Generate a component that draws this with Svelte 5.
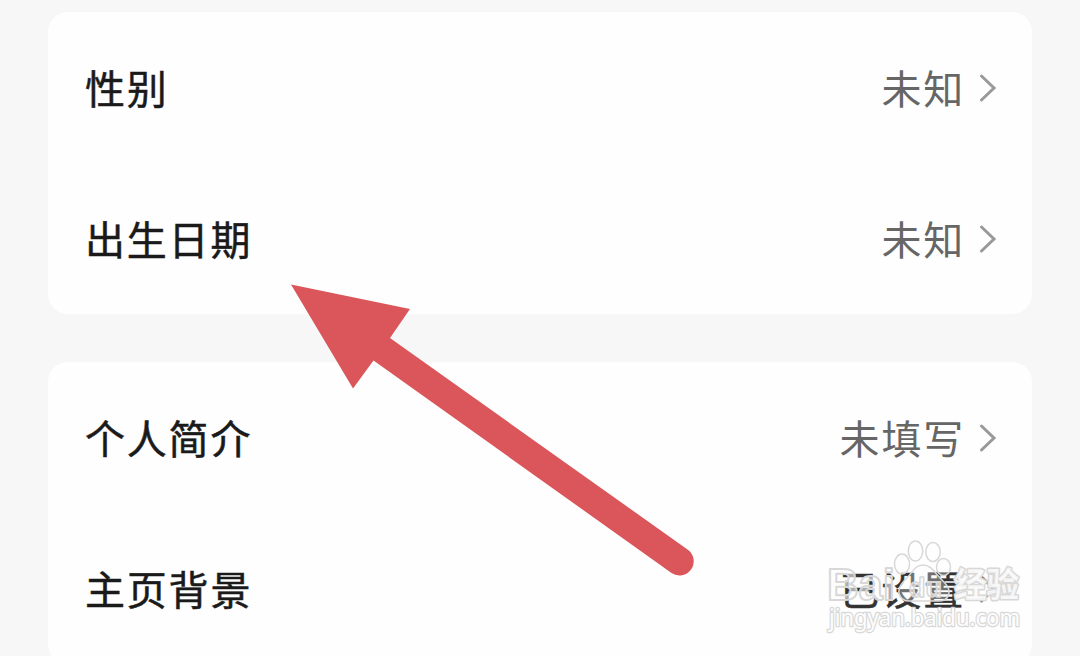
<script lang="ts">
	type Row = { label: string; value: string; dark?: boolean };

	const groups: Row[][] = [
		[
			{ label: '性别', value: '未知' },
			{ label: '出生日期', value: '未知' },
		],
		[
			{ label: '个人简介', value: '未填写' },
			{ label: '主页背景', value: '已设置', dark: true },
		],
	];
</script>

<main class="page">
	{#each groups as rows}
		<section class="card">
			{#each rows as row}
				<div class="row">
					<span class="label">{row.label}</span>
					<span class="value" class:dark={row.dark}>{row.value}</span>
					<svg class="chevron" class:dark={row.dark} viewBox="0 0 18 30" aria-hidden="true">
						<path d="M2.500 3 L15 15 L2.500 27" />
					</svg>
				</div>
			{/each}
		</section>
	{/each}

	<svg class="arrow" viewBox="0 0 1080 656" aria-hidden="true">
		<path d="M291 284.500 L410 309 L390 338 L687.500 549.500 A14 14 0 0 1 671.500 573 L373.500 360.500 L353 388.500 Z" />
	</svg>

	<svg class="watermark" viewBox="0 0 210 110">
		<g class="paw">
			<ellipse cx="82" cy="34" rx="7.500" ry="10" />
			<ellipse cx="95.500" cy="21" rx="7.200" ry="10" />
			<ellipse cx="113" cy="22" rx="7.200" ry="9.500" />
			<ellipse cx="123.500" cy="37" rx="7" ry="8.500" />
			<path d="M103 35 C94 35 92 44 84 51 C74 61 80 72 91 71 H117 C128 72 134 62 124 52 C115 44 112 35 103 35 Z" />
		</g>
		<text class="brand" x="7" y="70" textLength="68" lengthAdjust="spacingAndGlyphs">Bai</text>
		<text class="du" x="89" y="67" textLength="33" lengthAdjust="spacingAndGlyphs">du</text>
		<text class="cn" x="134" y="67" textLength="65" lengthAdjust="spacingAndGlyphs">经验</text>
		<text class="site" x="9" y="96" textLength="191" lengthAdjust="spacingAndGlyphs">jingyan.baidu.com</text>
	</svg>
</main>

<style>
	:global(body) {
		background: #f7f7f7;
		overflow: hidden;
	}

	.page {
		position: relative;
		box-sizing: border-box;
		height: 656px;
		padding: 12px 48px 0;
		display: flex;
		flex-direction: column;
		gap: 48px;
		overflow: hidden;
		font-family: 'Noto Sans CJK SC', sans-serif;
		font-size: 40px;
	}

	.card {
		flex: none;
		border-radius: 20px;
		background: #fefefe;
	}

	.row {
		display: flex;
		align-items: center;
		height: 151px;
		padding: 0 35px 0 37px;
		letter-spacing: 1.8px;
		line-height: 60px;
	}

	.label,
	.value {
		margin-top: -2px;
	}

	.label {
		flex: 1;
		color: #1a1a1a;
		-webkit-text-stroke: 0.5px #1a1a1a;
	}

	.value {
		color: #666;
	}

	.value.dark {
		color: #333;
		-webkit-text-stroke: 0.5px #333;
	}

	.chevron {
		width: 18px;
		height: 30px;
		margin-left: 14px;
		fill: none;
		stroke: #999;
		stroke-width: 3;
		stroke-linecap: round;
	}

	.chevron.dark {
		stroke: #777;
	}

	.arrow {
		position: absolute;
		inset: 0;
		width: 1080px;
		height: 656px;
		fill: #db565b;
	}

	.watermark {
		position: absolute;
		left: 820px;
		top: 530px;
		width: 210px;
		height: 110px;
		fill: rgba(255, 255, 255, 0.6);
		stroke: #d8d8d8;
		stroke-width: 1.5;
		stroke-linejoin: round;
	}

	.paw {
		fill: rgba(255, 255, 255, 0.3);
	}

	.brand {
		font: bold 45px 'Liberation Sans', sans-serif;
		stroke-width: 2;
	}

	.du {
		font: bold 27px 'Liberation Sans', sans-serif;
	}

	.cn {
		font: bold 34px 'Noto Sans CJK SC', sans-serif;
		fill: rgba(255, 255, 255, 0.75);
		stroke-width: 3;
		paint-order: stroke;
	}

	.site {
		font: 23px 'Noto Sans', sans-serif;
		fill: #fdfdfd;
		stroke-width: 2.6;
		paint-order: stroke;
	}
</style>
